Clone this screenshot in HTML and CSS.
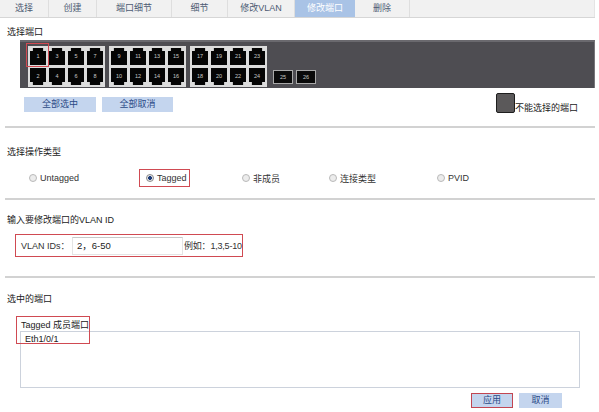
FILE: index.html
```html
<!DOCTYPE html>
<html>
<head>
<meta charset="utf-8">
<link rel="stylesheet" href="styles.css">
</head>
<body>
<div class="tabs">
  <div class="tab w49">选择</div>
  <div class="tab w48">创建</div>
  <div class="tab w75">端口细节</div>
  <div class="tab w56">细节</div>
  <div class="tab w67">修改VLAN</div>
  <div class="tab w60 active">修改端口</div>
  <div class="tab w55">删除</div>
  <div class="tab rest"></div>
</div>
<div class="content">
  <div class="title t1">选择端口</div>
  <div class="panel">
    <div class="group">
      <div class="port top">1</div><div class="port top">3</div><div class="port top">5</div><div class="port top">7</div>
      <div class="port bot">2</div><div class="port bot">4</div><div class="port bot">6</div><div class="port bot">8</div>
    </div>
    <div class="group">
      <div class="port top">9</div><div class="port top">11</div><div class="port top">13</div><div class="port top">15</div>
      <div class="port bot">10</div><div class="port bot">12</div><div class="port bot">14</div><div class="port bot">16</div>
    </div>
    <div class="group">
      <div class="port top">17</div><div class="port top">19</div><div class="port top">21</div><div class="port top">23</div>
      <div class="port bot">18</div><div class="port bot">20</div><div class="port bot">22</div><div class="port bot">24</div>
    </div>
    <div class="sfp">25</div>
    <div class="sfp">26</div>
    <div class="sel-mark"></div>
  </div>
  <div class="btnrow">
    <div class="btn b1">全部选中</div>
    <div class="btn b2">全部取消</div>
    <div class="legend"><span class="legend-box"></span><span class="legend-text">不能选择的端口</span></div>
  </div>
  <div class="divider d1"></div>

  <div class="title t2">选择操作类型</div>
  <div class="radios">
    <div class="rcell c1"><span class="ritem"><span class="radio"></span>Untagged</span></div>
    <div class="rcell c2"><span class="ritem hl"><span class="radio on"></span>Tagged</span></div>
    <div class="rcell c3"><span class="ritem"><span class="radio"></span>非成员</span></div>
    <div class="rcell c4"><span class="ritem"><span class="radio"></span>连接类型</span></div>
    <div class="rcell c5"><span class="ritem"><span class="radio"></span>PVID</span></div>
  </div>
  <div class="divider d2"></div>

  <div class="title t3">输入要修改端口的VLAN ID</div>
  <div class="vlanbox">
    <span class="vlabel">VLAN IDs：</span>
    <span class="vinput">2，6-50</span>
    <span class="vhint">例如：1,3,5-10</span>
  </div>
  <div class="divider d3"></div>

  <div class="title t4">选中的端口</div>
  <div class="members">
    <div class="mlabel">Tagged 成员端口</div>
    <div class="mlist">Eth1/0/1</div>
    <div class="mmark"></div>
  </div>
  <div class="actions">
    <div class="btn apply">应用</div>
    <div class="btn cancel">取消</div>
  </div>
</div>
</body>
</html>
```
FILE: styles.css
```css
html, body {
  margin: 0;
  padding: 0;
  background: #ffffff;
  font-family: "Liberation Sans", "Noto Sans CJK SC", sans-serif;
  font-size: 9px;
  color: #333333;
}
.tabs {
  display: flex;
  height: 17px;
  background: #f1f1f1;
  border-bottom: 1px solid #d6d6d6;
  width: 595px;
}
.tab {
  box-sizing: border-box;
  height: 17px;
  line-height: 17px;
  text-align: center;
  color: #4d5b73;
  border-right: 1px solid #dedede;
  font-size: 9px;
}
.tab.w49 { width: 49px; }
.tab.w48 { width: 48px; }
.tab.w75 { width: 75px; }
.tab.w56 { width: 56px; }
.tab.w67 { width: 67px; }
.tab.w60 { width: 60px; }
.tab.w55 { width: 55px; }
.tab.rest { flex: 1; border-right: 1px solid #e4e4e4; }
.tab.active {
  background: #a9c3e6;
  color: #ffffff;
  border-right: none;
}
.content {
  padding-left: 7px;
}
.title {
  height: 12px;
  line-height: 12px;
  color: #222222;
  white-space: nowrap;
}
.t1 { margin-top: 8px; }
.panel {
  position: relative;
  box-sizing: border-box;
  margin-top: 2px;
  margin-left: 13px;
  width: 575px;
  height: 48px;
  background: #4e4d52;
  border-top: 2px solid #6a696e;
  border-right: 1px solid #77767a;
  display: flex;
  align-items: flex-start;
  padding-left: 8px;
  padding-top: 4px;
}
.group {
  display: grid;
  grid-template-columns: repeat(4, 16px);
  grid-template-rows: 17px 17px;
  column-gap: 3px;
  row-gap: 3px;
  padding: 2px;
  background: #dcdcdc;
  margin-right: 4px;
}
.port {
  background: #050505;
  color: #c8c8c8;
  font-size: 5.5px;
  line-height: 17px;
  text-align: center;
  -webkit-font-smoothing: antialiased;
}
.port.top {
  clip-path: polygon(0 18%, 18% 18%, 18% 0, 82% 0, 82% 18%, 100% 18%, 100% 100%, 0 100%);
}
.port.bot {
  clip-path: polygon(0 0, 100% 0, 100% 82%, 82% 82%, 82% 100%, 18% 100%, 18% 82%, 0 82%);
}
.sfp {
  box-sizing: border-box;
  align-self: flex-end;
  margin-bottom: 4px;
  width: 20px;
  height: 14px;
  margin-left: 2px;
  margin-right: 1px;
  background: #0a0a0a;
  border: 1px solid #a9a9a9;
  color: #c8c8c8;
  font-size: 5.5px;
  line-height: 12px;
  text-align: center;
}
.sel-mark {
  position: absolute;
  left: 6px;
  top: 1px;
  width: 21px;
  height: 22px;
  border: 1px solid #d04a52;
}
.btnrow {
  display: flex;
  align-items: flex-end;
  margin-top: 5px;
  height: 20px;
}
.btn {
  box-sizing: border-box;
  height: 15px;
  line-height: 15px;
  text-align: center;
  background: #c4d5ee;
  color: #2b4a86;
}
.b1 { width: 72px; margin-left: 17px; margin-bottom: 1px; }
.b2 { width: 71px; margin-left: 6px; margin-bottom: 1px; }
.legend {
  display: flex;
  align-items: flex-end;
  margin-left: 323px;
}
.legend-box {
  box-sizing: border-box;
  width: 19px;
  height: 20px;
  background: #5b595a;
  border: 1px solid #1e1e1e;
  border-radius: 2px;
}
.legend-text {
  line-height: 9px;
  color: #222222;
  white-space: nowrap;
}
.divider {
  width: 590px;
  margin-left: -2px;
  height: 2px;
  background: #d2d2d2;
}
.d1 { margin-top: 13px; }
.t2 { margin-top: 18px; }
.radios {
  display: flex;
  margin-top: 11px;
  height: 18px;
  padding-left: 15px;
}
.rcell { display: flex; }
.c1 { width: 117px; }
.c2 { width: 96px; }
.c3 { width: 87px; }
.c4 { width: 108px; }
.c5 { width: 80px; }
.ritem {
  box-sizing: border-box;
  display: inline-flex;
  align-items: center;
  height: 18px;
  padding-left: 6px;
  padding-right: 2px;
  border: 1px solid transparent;
  color: #333333;
  white-space: nowrap;
}
.ritem.hl { border-color: #d04a52; }
.radio {
  box-sizing: border-box;
  width: 8px;
  height: 8px;
  border-radius: 50%;
  border: 1px solid #b9b9b9;
  background: #ececec;
  margin-right: 3px;
}
.radio.on {
  background: radial-gradient(circle, #1d3c7a 0, #1d3c7a 1.6px, #e8e8e8 2.2px);
  border-color: #8a8a8a;
}
.d2 { margin-top: 11px; }
.t3 { margin-top: 14px; }
.vlanbox {
  box-sizing: border-box;
  display: flex;
  align-items: center;
  margin-top: 8px;
  margin-left: 8px;
  width: 228px;
  height: 23px;
  border: 1px solid #d04a52;
  padding-left: 5px;
  white-space: nowrap;
}
.vlabel { width: 51px; color: #333333; }
.vinput {
  box-sizing: border-box;
  width: 111px;
  height: 18px;
  line-height: 16px;
  padding-left: 4px;
  border: 1px solid #e4e4e4;
  border-top-color: #c8c8c8;
  color: #222222;
  font-size: 9.5px;
}
.vhint { margin-left: 1px; color: #333333; letter-spacing: -0.2px; }
.d3 { margin-top: 19px; }
.t4 { margin-top: 15px; }
.members {
  position: relative;
  margin-top: 14px;
  margin-left: 13px;
}
.mlabel {
  height: 12px;
  line-height: 12px;
  padding-left: 1px;
  color: #222222;
  white-space: nowrap;
}
.mlist {
  box-sizing: border-box;
  width: 560px;
  height: 57px;
  border: 1px solid #ccd2dc;
  padding-left: 4px;
  padding-top: 2px;
  line-height: 10px;
  color: #222222;
}
.mmark {
  position: absolute;
  left: -4px;
  top: -3px;
  width: 72px;
  height: 26px;
  border: 1px solid #d04a52;
}
.actions {
  display: flex;
  margin-top: 5px;
  margin-left: 464px;
}
.apply {
  width: 42px;
  border: 1px solid #c24652;
  line-height: 13px;
}
.cancel {
  width: 43px;
  margin-left: 6px;
}
```
